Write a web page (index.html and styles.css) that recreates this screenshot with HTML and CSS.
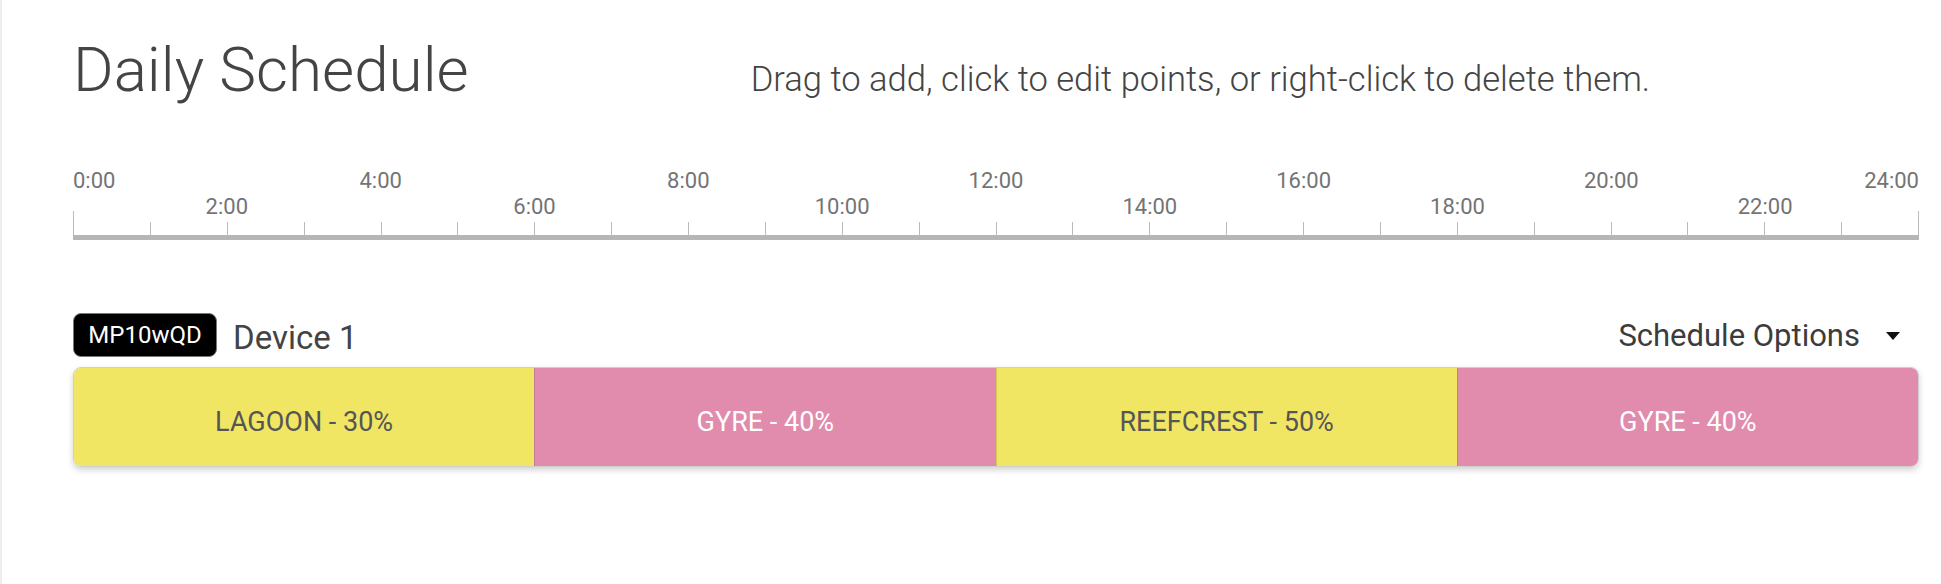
FILE: index.html
```html
<!DOCTYPE html>
<html lang="en">
<head>
    <meta charset="UTF-8">
    <meta name="viewport" content="width=device-width, initial-scale=1.0">
    <title>Daily Schedule</title>
    <link rel="stylesheet" href="styles.css">
</head>
<body>

<div class="schedule">
    <div class="schedule-head">
        <h1>Daily Schedule</h1>
        <p class="hint">Drag to add, click to edit points, or right-click to delete them.</p>
    </div>

    <div class="timeline">
        <div class="labels">
            <span class="up first" style="grid-column: 1 / span 2">0:00</span>
            <span class="down" style="grid-column: 2 / span 2">2:00</span>
            <span class="up" style="grid-column: 4 / span 2">4:00</span>
            <span class="down" style="grid-column: 6 / span 2">6:00</span>
            <span class="up" style="grid-column: 8 / span 2">8:00</span>
            <span class="down" style="grid-column: 10 / span 2">10:00</span>
            <span class="up" style="grid-column: 12 / span 2">12:00</span>
            <span class="down" style="grid-column: 14 / span 2">14:00</span>
            <span class="up" style="grid-column: 16 / span 2">16:00</span>
            <span class="down" style="grid-column: 18 / span 2">18:00</span>
            <span class="up" style="grid-column: 20 / span 2">20:00</span>
            <span class="down" style="grid-column: 22 / span 2">22:00</span>
            <span class="up last" style="grid-column: 23 / span 2">24:00</span>
        </div>
        <div class="ticks">
            <i class="end"></i><i></i><i></i><i></i><i></i><i></i><i></i><i></i><i></i><i></i><i></i><i></i><i></i>
            <i></i><i></i><i></i><i></i><i></i><i></i><i></i><i></i><i></i><i></i><i></i><i class="end"></i>
        </div>
        <div class="axis"></div>
    </div>

    <div class="device">
        <div class="device-head">
            <span class="badge">MP10wQD</span>
            <span class="device-name">Device 1</span>
            <span class="options">Schedule Options
                <svg width="14" height="8" viewBox="0 0 14 8"><polygon points="0,0 14,0 7,8" fill="#111"/></svg>
            </span>
        </div>
        <div class="bar">
            <div class="segment lagoon">LAGOON - 30%</div>
            <div class="segment gyre">GYRE - 40%</div>
            <div class="segment lagoon">REEFCREST - 50%</div>
            <div class="segment gyre">GYRE - 40%</div>
        </div>
    </div>
</div>

</body>
</html>
```

FILE: styles.css
```css
body {
    margin: 0;
    background-color: #fff;
    font-family: Roboto, "Liberation Sans", sans-serif;
    color: #444;
}
.schedule {
    border-left: 2px solid #ededed;
    padding: 39px 22px 40px 71px;
    min-height: 505px;
}
.schedule-head {
    display: flex;
    align-items: baseline;
    gap: 282px;
}
.schedule-head h1 {
    margin: 0;
    font-size: 62px;
    font-weight: 300;
    line-height: 62px;
    color: #444;
}
.schedule-head .hint {
    margin: 0;
    font-size: 34.6px;
    font-weight: 300;
    line-height: 34px;
    color: #444;
}
.timeline {
    margin-top: 67px;
}
.timeline .labels {
    display: grid;
    grid-template-columns: repeat(24, 1fr);
    grid-template-rows: 26px 26px;
    font-size: 22px;
    line-height: 26px;
    color: #747474;
}
.timeline .labels span {
    text-align: center;
}
.timeline .labels .up {
    grid-row: 1;
}
.timeline .labels .down {
    grid-row: 2;
}
.timeline .labels .first {
    text-align: left;
}
.timeline .labels .last {
    text-align: right;
}
.timeline .ticks {
    display: flex;
    justify-content: space-between;
    align-items: flex-end;
    height: 24px;
    margin-top: -9px;
}
.timeline .ticks i {
    width: 1px;
    height: 13px;
    background-color: #bcbcbc;
}
.timeline .ticks i.end {
    height: 24px;
}
.timeline .axis {
    height: 5px;
    background-color: #b6b6b6;
}
.device {
    margin-top: 73px;
}
.device-head {
    display: flex;
    align-items: center;
    height: 44px;
}
.badge {
    box-sizing: border-box;
    width: 144px;
    height: 44px;
    line-height: 42px;
    text-align: center;
    background-color: #000;
    color: #fff;
    border: 1px solid #777;
    border-radius: 8px;
    font-size: 24px;
}
.device-name {
    margin-left: 16px;
    font-size: 33px;
    color: #444;
    padding-top: 4px;
}
.options {
    margin-left: auto;
    margin-right: 19px;
    display: flex;
    align-items: center;
    gap: 26px;
    font-size: 31px;
    color: #3c3c3c;
}
.options svg {
    margin-top: 2px;
}
.bar {
    display: flex;
    margin-top: 10px;
    height: 98px;
    border: 1px solid #cfcfcf;
    border-radius: 8px;
    overflow: hidden;
    box-shadow: 0 3px 6px rgba(0, 0, 0, 0.18);
}
.segment {
    flex: 1;
    display: flex;
    align-items: center;
    justify-content: center;
    padding-top: 10px;
    font-size: 27px;
}
.segment + .segment {
    border-left: 1px solid rgba(0, 0, 0, 0.12);
}
.segment.lagoon {
    background-color: #f1e564;
    color: #555;
}
.segment.gyre {
    background-color: #e18bad;
    color: #fff;
}
```
